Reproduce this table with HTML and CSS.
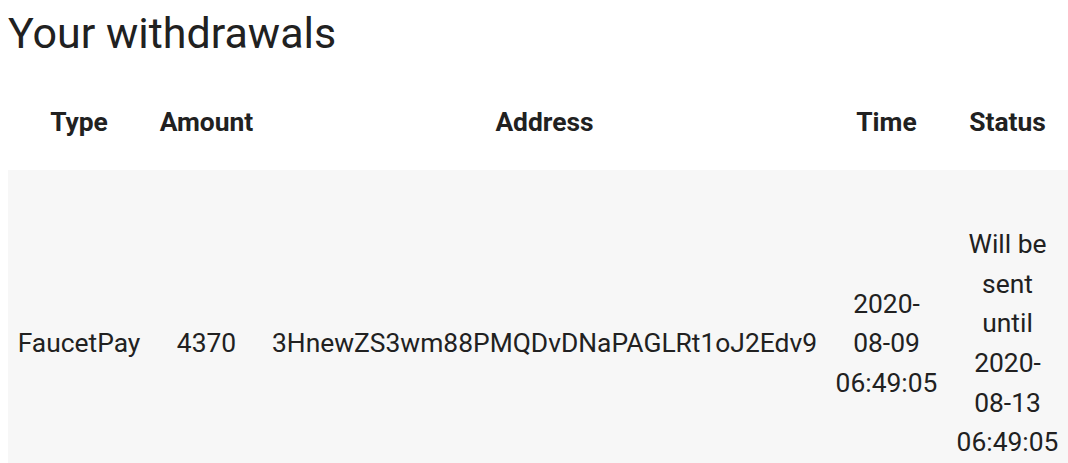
FILE: index.html
```html
<!DOCTYPE html>
<html>
<head>
<meta charset="utf-8">
<link rel="stylesheet" href="styles.css">
</head>
<body>
<h3 class="title">Your withdrawals</h3>
<table class="wd">
  <colgroup>
    <col class="c-type">
    <col class="c-amount">
    <col class="c-address">
    <col class="c-time">
    <col class="c-status">
  </colgroup>
  <thead>
    <tr><th>Type</th><th>Amount</th><th>Address</th><th>Time</th><th>Status</th></tr>
  </thead>
  <tbody>
    <tr>
      <td>FaucetPay</td>
      <td>4370</td>
      <td>3HnewZS3wm88PMQDvDNaPAGLRt1oJ2Edv9</td>
      <td>2020-08-09 06:49:05</td>
      <td>Will be sent until 2020-08-13 06:49:05</td>
    </tr>
  </tbody>
</table>
</body>
</html>
```
FILE: styles.css
```css
html, body {
  margin: 0;
  padding: 0;
  background: #fff;
}
body {
  padding: 0 0 0 8px;
  font-family: Roboto, "Noto Sans", sans-serif;
  color: #212121;
  font-size: 26.4px;
  line-height: 1.5;
}
.title {
  font-weight: 400;
  font-size: 43px;
  line-height: 1.2;
  margin: 8px 0 0 0;
  color: #212121;
}
.wd {
  border-collapse: collapse;
  margin-top: 43px;
  width: 1060px;
  table-layout: fixed;
}
.c-type { width: 142px; }
.c-amount { width: 113px; }
.c-address { width: 563px; }
.c-time { width: 121px; }
.c-status { width: 121px; }
.wd th {
  font-weight: 700;
  text-align: center;
  padding: 0 9px 28px;
  vertical-align: bottom;
}
.wd td {
  text-align: center;
  vertical-align: middle;
  padding: 55px 9px 28px;
  background: #f7f7f7;
}
```
